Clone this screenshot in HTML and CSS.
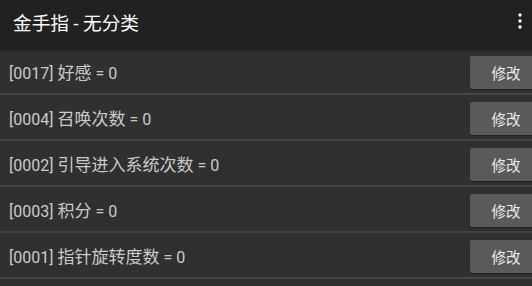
FILE: index.html
```html
<!DOCTYPE html>
<html>
<head>
<meta charset="utf-8">
<link rel="stylesheet" href="styles.css">
</head>
<body>
<div class="app">
  <header class="bar">
    <div class="title"><span class="cjk">金手指</span> - <span class="cjk">无分类</span></div>
    <svg class="more" width="4" height="16" viewBox="0 0 4 16"><circle cx="2" cy="2" r="1.7" fill="#fff"/><circle cx="2" cy="8" r="1.7" fill="#fff"/><circle cx="2" cy="14" r="1.7" fill="#fff"/></svg>
  </header>
  <ul class="list">
    <li class="row"><span class="label">[0017] <span class="cjk">好感</span> = 0</span><button class="btn">修改</button></li>
    <li class="row"><span class="label">[0004] <span class="cjk">召唤次数</span> = 0</span><button class="btn">修改</button></li>
    <li class="row"><span class="label">[0002] <span class="cjk">引导进入系统次数</span> = 0</span><button class="btn">修改</button></li>
    <li class="row"><span class="label">[0003] <span class="cjk">积分</span> = 0</span><button class="btn">修改</button></li>
    <li class="row"><span class="label">[0001] <span class="cjk">指针旋转度数</span> = 0</span><button class="btn">修改</button></li>
  </ul>
</div>
</body>
</html>
```
FILE: styles.css
```css
html, body {
  margin: 0;
  padding: 0;
  background: #303030;
  overflow: hidden;
}
body {
  width: 532px;
  height: 286px;
  font-family: Roboto, "Noto Sans CJK SC", sans-serif;
}
.app {
  width: 532px;
  height: 286px;
  overflow: hidden;
  background: #303030;
}
.bar {
  height: 49px;
  background: #212121;
  display: flex;
  align-items: center;
  justify-content: space-between;
  padding: 0 10px 0 13px;
  box-sizing: border-box;
  box-shadow: 0 1px 3px rgba(0,0,0,0.35);
  position: relative;
  z-index: 1;
}
.title {
  color: #ffffff;
  font-size: 18px;
  margin-top: -7px;
}
.title .cjk {
  font-size: 18.7px;
}
.more {
  margin-top: -7px;
}
.list {
  list-style: none;
  margin: 0;
  padding: 0;
}
.row {
  height: 44px;
  border-bottom: 2px solid #444444;
  display: flex;
  align-items: center;
  justify-content: space-between;
  padding-left: 9px;
}
.label {
  color: #cbcbcb;
  font-size: 16px;
}
.label .cjk {
  font-size: 17px;
}
.btn {
  width: 72px;
  height: 33px;
  margin-right: -10px;
  margin-top: 2px;
  background: #5a5a5a;
  color: #ececec;
  border: none;
  border-radius: 2px;
  font-family: Roboto, "Noto Sans CJK SC", sans-serif;
  font-size: 14.5px;
  padding: 0;
  box-shadow: 0 1px 1px rgba(0,0,0,0.3);
}
```
